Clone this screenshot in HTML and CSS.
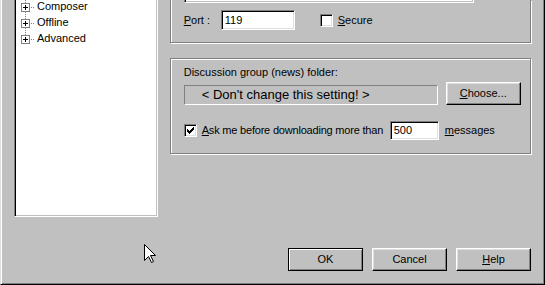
FILE: index.html
```html
<!DOCTYPE html>
<html lang="en">
<head>
<meta charset="UTF-8">
<title>Preferences - Newsgroup Servers</title>
<link rel="stylesheet" href="styles.css">
</head>
<body>

<div class="window">
    <div class="main">
        <!-- category tree, scrolled to the bottom -->
        <div class="tree">
            <div class="tree-item">
                <svg class="node" width="16" height="16" viewBox="0 0 16 16">
                    <rect x="5" y="0" width="1" height="1" fill="#808080"/>
                    <rect x="5" y="2" width="1" height="1" fill="#808080"/>
                    <rect x="5" y="12" width="1" height="1" fill="#808080"/>
                    <rect x="5" y="14" width="1" height="1" fill="#808080"/>
                    <rect x="11" y="7" width="1" height="1" fill="#808080"/>
                    <rect x="13" y="7" width="1" height="1" fill="#808080"/>
                    <rect x="1.5" y="3.5" width="8" height="8" fill="#fff" stroke="#808080"/>
                    <rect x="3" y="7" width="5" height="1" fill="#000"/>
                    <rect x="5" y="5" width="1" height="5" fill="#000"/>
                </svg>
                <span>Composer</span>
            </div>
            <div class="tree-item">
                <svg class="node" width="16" height="16" viewBox="0 0 16 16">
                    <rect x="5" y="0" width="1" height="1" fill="#808080"/>
                    <rect x="5" y="2" width="1" height="1" fill="#808080"/>
                    <rect x="5" y="12" width="1" height="1" fill="#808080"/>
                    <rect x="5" y="14" width="1" height="1" fill="#808080"/>
                    <rect x="11" y="7" width="1" height="1" fill="#808080"/>
                    <rect x="13" y="7" width="1" height="1" fill="#808080"/>
                    <rect x="1.5" y="3.5" width="8" height="8" fill="#fff" stroke="#808080"/>
                    <rect x="3" y="7" width="5" height="1" fill="#000"/>
                    <rect x="5" y="5" width="1" height="5" fill="#000"/>
                </svg>
                <span>Offline</span>
            </div>
            <div class="tree-item">
                <svg class="node" width="16" height="16" viewBox="0 0 16 16">
                    <rect x="5" y="0" width="1" height="1" fill="#808080"/>
                    <rect x="5" y="2" width="1" height="1" fill="#808080"/>
                    <rect x="11" y="7" width="1" height="1" fill="#808080"/>
                    <rect x="13" y="7" width="1" height="1" fill="#808080"/>
                    <rect x="1.5" y="3.5" width="8" height="8" fill="#fff" stroke="#808080"/>
                    <rect x="3" y="7" width="5" height="1" fill="#000"/>
                    <rect x="5" y="5" width="1" height="5" fill="#000"/>
                </svg>
                <span>Advanced</span>
            </div>
        </div>

        <div class="pages">
            <!-- server box, top part scrolled off -->
            <div class="group group-server">
                <div class="field-stub"></div>
                <div class="row port-row">
                    <span class="port-label"><u>P</u>ort :</span>
                    <div class="input port-input">119</div>
                    <span class="check"></span>
                    <span class="check-text"><u>S</u>ecure</span>
                </div>
            </div>

            <div class="group group-news">
                <div class="caption">Discussion group (news) folder:</div>
                <div class="row folder-row">
                    <div class="static-field">&lt; Don't change this setting! &gt;</div>
                    <div class="button choose-btn"><u>C</u>hoose...</div>
                </div>
                <div class="row ask-row">
                    <span class="check checked">
                        <svg width="7" height="7" viewBox="0 0 7 7">
                            <path d="M0 2h1v3H0z M1 3h1v3H1z M2 4h1v3H2z M3 3h1v3H3z M4 2h1v3H4z M5 1h1v3H5z M6 0h1v3H6z" fill="#000"/>
                        </svg>
                    </span>
                    <span class="check-text ask-text"><u>A</u>sk me before downloading more than</span>
                    <div class="input count-input">500</div>
                    <span class="after-text"><u>m</u>essages</span>
                </div>
            </div>
        </div>
    </div>

    <div class="buttons">
        <div class="button default-btn">OK</div>
        <div class="button">Cancel</div>
        <div class="button"><u>H</u>elp</div>
    </div>

    <svg class="cursor" width="13" height="20" viewBox="0 0 13 20">
        <path d="M0.5 0.5 L0.5 16.5 L4.5 12.5 L7.5 18.5 L9.5 17.5 L6.5 11.5 L11.5 11.5 Z" fill="#fff" stroke="#000"/>
    </svg>
</div>

</body>
</html>
```

FILE: styles.css
```css
body {
    margin: 0;
    font-family: "Liberation Sans", Arial, sans-serif;
    font-size: 11px;
    line-height: 13px;
    color: #000;
    background: #c0c0c0;
}
u {
    text-decoration: underline;
    text-underline-offset: 1px;
}
.window {
    position: relative;
    width: 545px;
    height: 285px;
    box-sizing: border-box;
    background: #c0c0c0;
    border-left: 1px solid #dfdfdf;
    border-right: 1px solid #000;
    border-bottom: 1px solid #000;
    box-shadow: inset 1px 0 #fff, inset -1px -1px #808080;
    padding: 0 13px 0 13px;
    display: flex;
    flex-direction: column;
}
.main {
    display: flex;
    gap: 12px;
}

/* tree */
.tree {
    width: 144px;
    height: 217px;
    box-sizing: border-box;
    background: #fff;
    border-left: 1px solid #808080;
    border-right: 1px solid #fff;
    border-bottom: 1px solid #fff;
    box-shadow: inset 1px 0 #000, inset -1px -1px #c0c0c0;
    padding-left: 5px;
}
.tree-item {
    height: 16px;
    display: flex;
    align-items: flex-start;
}
.node {
    display: block;
    margin-right: 1px;
}

/* group boxes */
.pages {
    width: 362px;
}
.group {
    width: 361px;
    box-sizing: border-box;
    border: 1px solid #808080;
    box-shadow: inset 1px 1px #fff, 1px 1px #fff;
    padding-left: 13px;
}
.group-server {
    height: 43px;
    border-top: none;
    box-shadow: inset 1px 0 #fff, 1px 1px #fff;
}
.group-news {
    height: 96px;
    margin-top: 15px;
    padding-top: 7px;
}
.row {
    display: flex;
    align-items: center;
}
.field-stub {
    width: 290px;
    height: 3px;
    box-sizing: border-box;
    background: #fff;
    border-left: 1px solid #808080;
    border-right: 1px solid #fff;
    border-bottom: 1px solid #fff;
    box-shadow: inset 1px 0 #000, inset -1px -1px #c0c0c0;
}
.port-row {
    margin-top: 7px;
}
.port-label {
    width: 37px;
}
.input {
    box-sizing: border-box;
    background: #fff;
    border: 1px solid;
    border-color: #808080 #fff #fff #808080;
    box-shadow: inset 1px 1px #000, inset -1px -1px #dfdfdf;
    padding: 2px 0 0 3px;
}
.port-input {
    width: 74px;
    height: 20px;
    padding-top: 3px;
}
.check {
    width: 13px;
    height: 13px;
    box-sizing: border-box;
    background: #fff;
    border: 1px solid;
    border-color: #808080 #fff #fff #808080;
    box-shadow: inset 1px 1px #000, inset -1px -1px #dfdfdf;
    padding: 2px 0 0 2px;
}
.check svg {
    display: block;
}
.port-row .check {
    margin-left: 25px;
}
.check-text {
    margin-left: 5px;
}

.folder-row {
    margin-top: 3px;
    align-items: flex-end;
}
.static-field {
    width: 254px;
    height: 20px;
    box-sizing: border-box;
    border: 1px solid;
    border-color: #808080 #fff #fff #808080;
    font-size: 13px;
    line-height: 18px;
    padding-left: 17px;
}
.button {
    width: 75px;
    height: 23px;
    box-sizing: border-box;
    border: 1px solid;
    border-color: #fff #000 #000 #fff;
    box-shadow: inset -1px -1px #808080, inset 1px 1px #dfdfdf;
    text-align: center;
    line-height: 20px;
}
.choose-btn {
    margin-left: 8px;
}
.ask-row {
    margin-top: 16px;
}
.ask-text {
    width: 183px;
    white-space: nowrap;
    letter-spacing: -0.2px;
}
.count-input {
    width: 49px;
    height: 19px;
    margin-left: 5px;
}
.after-text {
    margin-left: 6px;
}

/* dialog buttons */
.buttons {
    display: flex;
    justify-content: flex-end;
    gap: 9px;
    margin-top: 31px;
}
.default-btn {
    border-color: #000;
    box-shadow: inset 1px 1px #fff, inset -1px -1px #808080;
}

.cursor {
    position: absolute;
    left: 143px;
    top: 244px;
}
```
